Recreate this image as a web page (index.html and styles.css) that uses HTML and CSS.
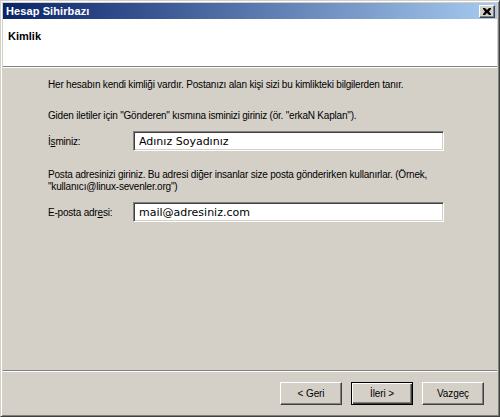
FILE: index.html
```html
<!DOCTYPE html>
<html lang="tr">
<head>
<meta charset="utf-8">
<title>Hesap Sihirbazı</title>
<link rel="stylesheet" href="styles.css">
</head>
<body>
<div class="window">
  <div class="titlebar">
    <span class="title">Hesap Sihirbazı</span>
    <span class="close">
      <svg width="8" height="7" viewBox="0 0 8 7"><path d="M0 0h2l2 2 2-2h2v1l-2 2.5 2 2.5v1h-2l-2-2-2 2h-2v-1l2-2.5-2-2.5z" fill="#000"/></svg>
    </span>
  </div>
  <div class="header">
    <span class="header-title">Kimlik</span>
  </div>
  <div class="sep"></div>
  <div class="content">
    <p class="para first">Her hesabın kendi kimliği vardır. Postanızı alan kişi sizi bu kimlikteki bilgilerden tanır.</p>
    <p class="para">Giden iletiler için "Gönderen" kısmına isminizi giriniz (ör. "erkaN Kaplan").</p>
    <div class="row">
      <label class="label">İ<u>s</u>miniz:</label>
      <input class="field" type="text" value="Adınız Soyadınız">
    </div>
    <p class="para p3">Posta adresinizi giriniz. Bu adresi diğer insanlar size posta gönderirken kullanırlar. (Örnek,<br>"kullanıcı@linux-sevenler.org")</p>
    <div class="row">
      <label class="label">E-posta adr<u>e</u>si:</label>
      <input class="field" type="text" value="mail@adresiniz.com">
    </div>
  </div>
  <div class="sep"></div>
  <div class="footer">
    <button class="btn">&lt; Geri</button>
    <button class="btn default">İleri &gt;</button>
    <button class="btn">Vazgeç</button>
  </div>
</div>
</body>
</html>
```
FILE: styles.css
```css
html, body {
  margin: 0;
  padding: 0;
  width: 500px;
  height: 417px;
  overflow: hidden;
  background: #d4d0c8;
}

.window {
  box-sizing: border-box;
  width: 500px;
  height: 417px;
  display: flex;
  flex-direction: column;
  background: #d4d0c8;
  border-top: 1px solid #d4d0c8;
  border-left: 1px solid #d4d0c8;
  border-right: 1px solid #404040;
  border-bottom: 1px solid #404040;
  box-shadow: inset 1px 1px #ffffff, inset -1px -1px #808080;
  padding: 2px;
  font-family: "Liberation Sans", "DejaVu Sans", sans-serif;
  font-size: 10px;
  letter-spacing: -0.2px;
  color: #000;
}

.titlebar {
  height: 16px;
  flex: none;
  display: flex;
  align-items: center;
  justify-content: space-between;
  background: linear-gradient(to right, #0a246a, #a6caf0);
  padding: 0 2px 0 3px;
}

.title {
  color: #fff;
  font-weight: bold;
  font-size: 11px;
  letter-spacing: 0.1px;
}

.close {
  box-sizing: border-box;
  width: 16px;
  height: 13px;
  background: #d4d0c8;
  border-top: 1px solid #ffffff;
  border-left: 1px solid #ffffff;
  border-right: 1px solid #404040;
  border-bottom: 1px solid #404040;
  box-shadow: inset -1px -1px #808080;
  display: flex;
  align-items: center;
  justify-content: center;
}

.header {
  height: 47px;
  box-sizing: border-box;
  flex: none;
  background: #fff;
  padding: 11px 0 0 5px;
}

.header-title {
  font-weight: bold;
  font-size: 11px;
  letter-spacing: 0;
  line-height: 13px;
}

.sep {
  height: 1px;
  flex: none;
  background: #808080;
  border-bottom: 1px solid #ffffff;
}

.content {
  flex: 1;
  padding: 0 0 0 45px;
}

.para {
  margin: 19px 0 0 0;
  line-height: 12px;
}

.para.first {
  margin-top: 11px;
}

.para.p3 {
  margin-top: 18px;
}

.row {
  display: flex;
  align-items: center;
  margin-top: 9px;
  height: 20px;
}

.label {
  width: 85px;
  flex: none;
}

.field {
  box-sizing: border-box;
  width: 311px;
  height: 20px;
  margin: 0;
  padding: 0 0 0 5px;
  border-style: solid;
  border-width: 1px;
  border-color: #808080 #ffffff #ffffff #808080;
  box-shadow: inset 1px 1px #404040, inset -1px -1px #d4d0c8;
  background: #fff;
  font-family: "DejaVu Sans", sans-serif;
  font-size: 11px;
  letter-spacing: 0;
  color: #000;
  outline: none;
}

.footer {
  flex: none;
  display: flex;
  justify-content: flex-end;
  gap: 9px;
  padding: 10px 13px 9px 0;
}

.btn {
  box-sizing: border-box;
  width: 62px;
  height: 23px;
  margin: 0;
  padding: 0;
  background: #d4d0c8;
  font-family: "Liberation Sans", "DejaVu Sans", sans-serif;
  font-size: 10px;
  letter-spacing: -0.1px;
  color: #000;
  border-style: solid;
  border-width: 1px;
  border-color: #ffffff #404040 #404040 #ffffff;
  box-shadow: inset -1px -1px #808080;
}

.btn.default {
  border-color: #000;
  box-shadow: inset 1px 1px #ffffff, inset -1px -1px #404040, inset -2px -2px #808080;
}
```
